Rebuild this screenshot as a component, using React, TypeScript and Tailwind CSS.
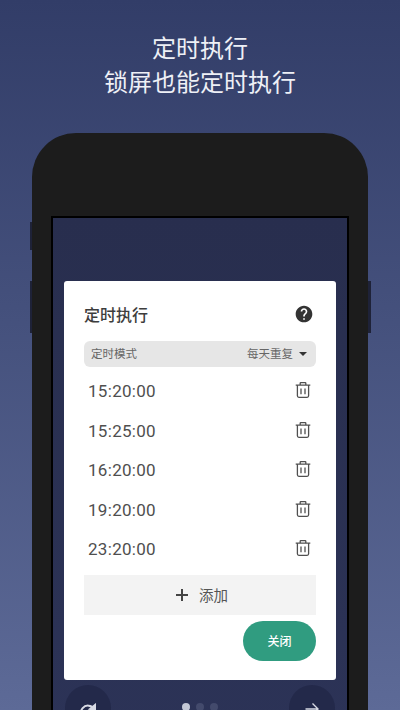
import React from 'react';

const times = ['15:20:00', '15:25:00', '16:20:00', '19:20:00', '23:20:00'];
const cjk = { fontFamily: '"Noto Sans CJK SC", "Noto Sans", sans-serif' };

function TrashIcon() {
  return (
    <svg className="-mt-[3px]" width="16" height="16" viewBox="0 0 16 16" fill="none" stroke="#505050" strokeWidth="1.3">
      <path d="M0.7 3.2h14.6M5.2 3V1.2q0-.5.5-.5h4.6q.5 0 .5.5V3M2.4 3.4v10.4q0 1.5 1.5 1.5h8.2q1.5 0 1.5-1.5V3.4M6 6.5v5.8M10 6.5v5.8" />
    </svg>
  );
}

function TimeRow({ time }: { time: string }) {
  return (
    <div className="flex h-[39.5px] items-center justify-between pl-[4px] pr-[5px]">
      <span className="text-[17px] tracking-[0.3px] text-[#4f4f4f]" style={{ fontFamily: 'Roboto, sans-serif' }}>{time}</span>
      <TrashIcon />
    </div>
  );
}

export default function App() {
  return (
    <div className="relative h-[710px] w-[400px] overflow-hidden bg-gradient-to-b from-[#323d68] to-[#5d6a97]" style={cjk}>
      <div className="pt-[30px] text-center text-[24px] leading-[34px] text-[#eef0f6]">
        <p>定时执行</p>
        <p>锁屏也能定时执行</p>
      </div>
      <div className="relative mx-[32px] mt-[35px] h-[620px] rounded-t-[44px] bg-[#1c1c1c] px-[19px] pt-[83px]">
        <span className="absolute -left-[2px] top-[89px] h-[28px] w-[2px] bg-[#1e2238]" />
        <span className="absolute -left-[2px] top-[148px] h-[52px] w-[2px] bg-[#1e2238]" />
        <span className="absolute -right-[3px] top-[148px] h-[52px] w-[3px] bg-[#1e2238]" />
        <div className="h-full border-2 border-b-0 border-black bg-gradient-to-b from-[#282e4e] to-[#2c3357] px-[12px] pt-[63px]">
          <div className="-mx-px h-[399px] rounded-[3px] bg-white px-[20px] pt-[20px]">
            <div className="flex items-center justify-between pr-[2.5px]">
              <span className="text-[16px] font-medium leading-[26px] text-[#3d3d3d]">定时执行</span>
              <svg width="20" height="20" viewBox="0 0 24 24" fill="#333333">
                <path d="M12 2C6.48 2 2 6.48 2 12s4.48 10 10 10 10-4.48 10-10S17.52 2 12 2zm1 17h-2v-2h2v2zm2.07-7.75l-.9.92C13.45 12.9 13 13.5 13 15h-2v-.5c0-1.1.45-2.1 1.17-2.83l1.24-1.26c.37-.36.59-.86.59-1.41 0-1.1-.9-2-2-2s-2 .9-2 2H8c0-2.21 1.79-4 4-4s4 1.79 4 4c0 .88-.36 1.68-.93 2.25z" />
              </svg>
            </div>
            <div className="mt-[14px] flex h-[26px] items-center justify-between rounded-[6px] bg-[#e6e6e6] pl-[7px] pr-[9px] text-[11.5px] text-[#666666]">
              <span>定时模式</span>
              <span className="flex items-center gap-[6px]">
                每天重复
                <span className="h-0 w-0 border-x-[4px] border-t-[4.5px] border-x-transparent border-t-[#333333]" />
              </span>
            </div>
            <div className="mt-[5px]">
              {times.map((time) => <TimeRow key={time} time={time} />)}
            </div>
            <button className="mt-[5px] flex h-[40px] w-full items-center justify-center gap-[11px] bg-[#f3f3f3] pl-[4px] text-[14.5px] text-[#555555]">
              <span className="relative h-[12px] w-[12px]">
                <span className="absolute left-0 top-[5px] h-[2px] w-[12px] bg-[#444444]" />
                <span className="absolute left-[5px] top-0 h-[12px] w-[2px] bg-[#444444]" />
              </span>
              添加
            </button>
            <div className="mt-[6px] flex justify-end">
              <button className="h-[40px] w-[73px] rounded-full bg-[#309c80] text-[12px] font-medium text-white">关闭</button>
            </div>
          </div>
          <div className="mt-[5px] flex items-start justify-between">
            <div className="flex h-[46px] w-[46px] items-start justify-center rounded-full bg-[#23294a] pt-[18px]">
              <svg width="18" height="18" viewBox="0 0 18 18" fill="none" stroke="#d8dae4" strokeWidth="2">
                <path d="M15 6A7 7 0 1 0 16 10" />
                <path d="M11 6l5-4v5z" fill="#d8dae4" />
              </svg>
            </div>
            <div className="mt-[18px] flex gap-[6px]">
              <span className="h-[8px] w-[8px] rounded-full bg-[#c4c8d6]" />
              <span className="h-[8px] w-[8px] rounded-full bg-[#434a6c]" />
              <span className="h-[8px] w-[8px] rounded-full bg-[#434a6c]" />
            </div>
            <div className="flex h-[46px] w-[46px] items-start justify-center rounded-full bg-[#23294a] pt-[17px]">
              <svg width="14" height="14" viewBox="0 0 14 14" fill="none" stroke="#d8dae4" strokeWidth="1.4">
                <path d="M0.5 7h12.5M7.5 1.5L13 7l-5.5 5.5" />
              </svg>
            </div>
          </div>
        </div>
      </div>
    </div>
  );
}
